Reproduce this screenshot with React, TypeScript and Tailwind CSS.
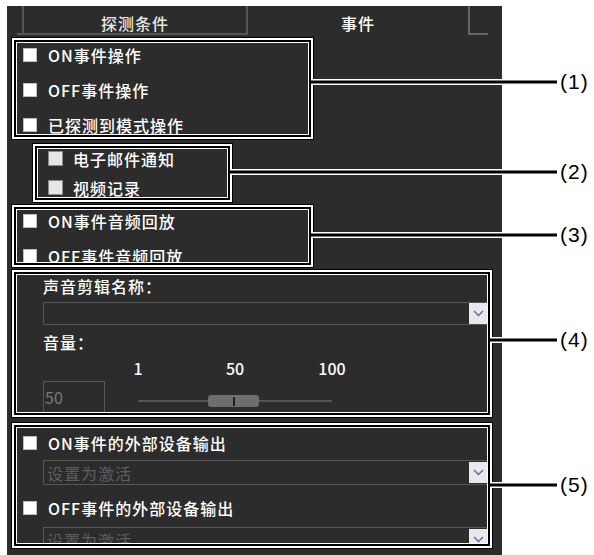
import React from 'react';

const cjk = { fontFamily: '"Noto Sans CJK SC", "Noto Sans", sans-serif' };

// white double frame around a group of settings
function Frame({ className, children }: { className: string; children: React.ReactNode }) {
    return (
        <div className={`border-2 border-white outline outline-1 outline-black ${className}`}>
            <div className="h-full border-2 border-black">
                <div className="h-full border border-white overflow-hidden">{children}</div>
            </div>
        </div>
    );
}

function Box({ soft }: { soft?: boolean }) {
    return soft ? (
        <span className="w-[15px] h-[15px] shrink-0 bg-[#e6e6e6] border border-[#8a8a8a]" />
    ) : (
        <span className="w-[14px] h-[14px] shrink-0 bg-white border border-[#bdbdbd]" />
    );
}

function Check({ label, soft, h }: { label: string; soft?: boolean; h: string }) {
    return (
        <div className={`flex items-center ${soft ? 'gap-[10px]' : 'gap-[11px]'} ${h}`}>
            <Box soft={soft} />
            <span className="text-[16px] leading-[20px] tracking-[1px] font-medium text-white whitespace-nowrap">{label}</span>
        </div>
    );
}

function Select({ text }: { text?: string }) {
    return (
        <div className="flex items-center w-[446px] h-full border border-[#565656]">
            <span className="flex-1 pl-[3px] text-[16px] leading-[20px] tracking-[1px] text-[#5e5e5e]">{text}</span>
            <span className="h-[21px] w-[19px] bg-[#e9e9e9] flex items-center justify-center">
                <svg width="11" height="7" viewBox="0 0 11 7">
                    <path d="M1 1 L5.5 5.5 L10 1" fill="none" stroke="#4a6fa5" strokeWidth="1.4" />
                </svg>
            </span>
        </div>
    );
}

const callouts = [
    { n: '(1)', y: 82, x: 313 },
    { n: '(2)', y: 172, x: 232 },
    { n: '(3)', y: 235, x: 312 },
    { n: '(4)', y: 340, x: 491 },
    { n: '(5)', y: 485, x: 491 },
];

export default function App() {
    return (
        <div className="relative w-[594px] h-[555px] bg-white overflow-hidden" style={cjk}>
            <div className="ml-[7px] mt-[6px] w-[495px] h-[549px] bg-[#2c2c2c] flex flex-col">
                {/* tabs */}
                <div className="flex h-[29px] shrink-0">
                    <div className="ml-[10px] w-[5px] border-b-2 border-[#555]" />
                    <div className="w-[226px] border-x-2 border-b-2 border-[#555] flex justify-center items-center pt-[6px] text-[16px] leading-[20px] tracking-[1px] font-medium text-[#e6e6e6]">
                        探测条件
                    </div>
                    <div className="w-[220px] flex justify-center items-center pt-[4px] text-[16px] leading-[20px] tracking-[1px] font-medium text-white">
                        事件
                    </div>
                    <div className="w-[20px] border-l-2 border-b-2 border-[#666]" />
                </div>

                <Frame className="mt-[3px] ml-[5px] w-[301px] h-[101px] shrink-0">
                    <div className="-mt-[6px] pl-[6px] flex flex-col">
                        <Check label="ON事件操作" h="h-[35px]" />
                        <Check label="OFF事件操作" h="h-[35px]" />
                        <Check label="已探测到模式操作" h="h-[35px]" />
                    </div>
                </Frame>

                <Frame className="mt-[5px] ml-[26px] w-[199px] h-[58px] shrink-0">
                    <div className="-mt-[5px] pl-[10px] flex flex-col">
                        <Check label="电子邮件通知" soft h="h-[29px]" />
                        <Check label="视频记录" soft h="h-[29px]" />
                    </div>
                </Frame>

                <Frame className="mt-[3px] ml-[5px] w-[301px] h-[62px] shrink-0">
                    <div className="-mt-[7px] pl-[6px] flex flex-col">
                        <Check label="ON事件音频回放" h="h-[35px]" />
                        <Check label="OFF事件音频回放" h="h-[35px]" />
                    </div>
                </Frame>

                <Frame className="mt-[3px] ml-[5px] w-[480px] h-[147px] shrink-0">
                    <div className="pl-[26px] flex flex-col text-white">
                        <div className="h-[22px] flex items-center text-[16px] leading-[20px] tracking-[1px] font-medium">声音剪辑名称：</div>
                        <div className="mt-[5px] h-[23px]">
                            <Select />
                        </div>
                        <div className="h-[34px] flex items-center text-[16px] leading-[20px] tracking-[1px] font-medium">音量：</div>
                        <div className="ml-[95px] w-[194px] h-[18px] flex justify-between items-center text-[16px] font-medium">
                            <span className="w-0 flex justify-center">1</span>
                            <span className="w-0 flex justify-center">50</span>
                            <span className="w-0 flex justify-center">100</span>
                        </div>
                        <div className="mt-[4px] flex items-start">
                            <div className="w-[62px] h-[32px] border border-[#565656] flex items-center text-[16px] text-[#7a7a7a] pl-[1px]">50</div>
                            <div className="relative ml-[33px] w-[194px] h-[32px]">
                                <div className="absolute left-0 right-0 top-[19px] h-[2px] bg-[#555]" />
                                <div className="absolute left-[70px] top-[14px] w-[51px] h-[12px] rounded-[3px] bg-[#6e6e6e] flex items-center justify-center">
                                    <span className="w-[2px] h-[9px] bg-[#1e1e1e]" />
                                </div>
                            </div>
                        </div>
                    </div>
                </Frame>

                <Frame className="mt-[6px] ml-[5px] w-[480px] h-[125px] shrink-0">
                    <div className="flex flex-col">
                        <div className="pl-[6px]">
                            <Check label="ON事件的外部设备输出" h="h-[30px]" />
                        </div>
                        <div className="mt-[2px] ml-[26px] h-[25px]">
                            <Select text="设置为激活" />
                        </div>
                        <div className="pl-[6px] pt-[3px]">
                            <Check label="OFF事件的外部设备输出" h="h-[39px]" />
                        </div>
                        <div className="ml-[26px] h-[25px]">
                            <Select text="设置为激活" />
                        </div>
                    </div>
                </Frame>
            </div>

            {/* callout lines and numbers */}
            <svg className="absolute inset-0 pointer-events-none" width="594" height="555">
                {callouts.map((c) => (
                    <g key={c.n}>
                        <line x1={c.x - 1} y1={c.y} x2={502} y2={c.y} stroke="#fff" strokeWidth="6" />
                        <line x1={c.x - 3} y1={c.y} x2={557} y2={c.y} stroke="#000" strokeWidth="3" />
                    </g>
                ))}
            </svg>
            {callouts.map((c) => (
                <span
                    key={c.n}
                    className="absolute left-[560px] text-[21px] leading-[24px] tracking-[1px] text-black"
                    style={{ top: c.y - 12, fontFamily: '"Liberation Sans", Arial, sans-serif' }}
                >
                    {c.n}
                </span>
            ))}
        </div>
    );
}
